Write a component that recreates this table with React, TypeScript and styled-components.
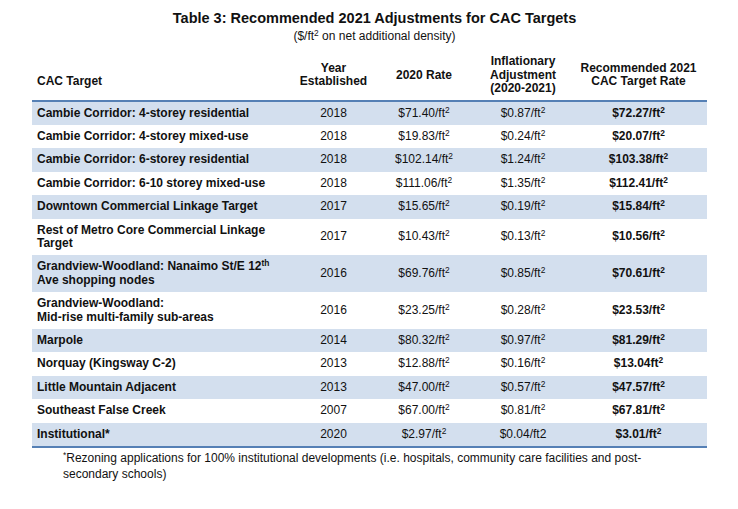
import React from "react";
import styled, { createGlobalStyle } from "styled-components";

const Global = createGlobalStyle`
  html, body { margin: 0; padding: 0; background: #fff; }
  body { font-family: "Liberation Sans", Arial, sans-serif; color: #111; }
`;

const Page = styled.div`
  width: 738px;
  height: 509px;
  padding: 10px 0 0 32px;
  box-sizing: border-box;
`;

const Title = styled.h1`
  margin: 0;
  width: 675px;
  text-align: center;
  font-size: 14.5px;
  line-height: 17px;
  font-weight: 700;
  padding-left: 10px;
  box-sizing: border-box;
`;

const Subtitle = styled.div`
  width: 675px;
  margin-top: 2px;
  text-align: center;
  font-size: 12px;
  line-height: 14px;
  padding-left: 10px;
  box-sizing: border-box;
`;

const Table = styled.div`
  width: 675px;
  margin-top: 8px;
`;

const cols = "263px 77px 104px 94px 137px";

const HeadRow = styled.div`
  display: grid;
  grid-template-columns: ${cols};
  align-items: center;
  padding: 4px 0 4px;
  border-bottom: 2px solid #5580b5;
  font-size: 12px;
  line-height: 13.5px;
  font-weight: 700;
`;

const HeadCell = styled.div<{ $left?: boolean }>`
  text-align: ${(p) => (p.$left ? "left" : "center")};
  padding-left: ${(p) => (p.$left ? "5px" : "0")};
  padding-top: ${(p) => (p.$left ? "13px" : "0")};
`;

const Body = styled.div`
  border-bottom: 2px solid #5580b5;
`;

const Row = styled.div<{ $shade: boolean }>`
  display: grid;
  grid-template-columns: ${cols};
  align-items: center;
  background: ${(p) => (p.$shade ? "#d3dfee" : "#ffffff")};
  padding: 5px 0;
  font-size: 12px;
  line-height: 13.4px;
`;

const NameCell = styled.div`
  font-weight: 700;
  padding-left: 5px;
`;

const NumCell = styled.div<{ $bold?: boolean }>`
  text-align: center;
  font-weight: ${(p) => (p.$bold ? 700 : 400)};
`;

const Sup = styled.sup`
  font-size: 0.7em;
  line-height: 0;
  vertical-align: 0.45em;
`;

const Footnote = styled.div`
  margin: 3px 0 0 31px;
  width: 600px;
  font-size: 12px;
  line-height: 15.5px;
`;

type R = {
  name: React.ReactNode;
  year: string;
  rate: string;
  infl: string;
  inflPlain?: boolean;
  rec: string;
  recNoSlash?: boolean;
};

const rows: R[] = [
  { name: "Cambie Corridor: 4-storey residential", year: "2018", rate: "$71.40", infl: "$0.87", rec: "$72.27" },
  { name: "Cambie Corridor: 4-storey mixed-use", year: "2018", rate: "$19.83", infl: "$0.24", rec: "$20.07" },
  { name: "Cambie Corridor: 6-storey residential", year: "2018", rate: "$102.14", infl: "$1.24", rec: "$103.38" },
  { name: "Cambie Corridor: 6-10 storey mixed-use", year: "2018", rate: "$111.06", infl: "$1.35", rec: "$112.41" },
  { name: "Downtown Commercial Linkage Target", year: "2017", rate: "$15.65", infl: "$0.19", rec: "$15.84" },
  {
    name: (
      <>
        Rest of Metro Core Commercial Linkage
        <br />
        Target
      </>
    ),
    year: "2017",
    rate: "$10.43",
    infl: "$0.13",
    rec: "$10.56",
  },
  {
    name: (
      <>
        Grandview-Woodland: Nanaimo St/E 12<Sup>th</Sup>
        <br />
        Ave shopping nodes
      </>
    ),
    year: "2016",
    rate: "$69.76",
    infl: "$0.85",
    rec: "$70.61",
  },
  {
    name: (
      <>
        Grandview-Woodland:
        <br />
        Mid-rise multi-family sub-areas
      </>
    ),
    year: "2016",
    rate: "$23.25",
    infl: "$0.28",
    rec: "$23.53",
  },
  { name: "Marpole", year: "2014", rate: "$80.32", infl: "$0.97", rec: "$81.29" },
  { name: "Norquay (Kingsway C-2)", year: "2013", rate: "$12.88", infl: "$0.16", rec: "$13.04", recNoSlash: true },
  { name: "Little Mountain Adjacent", year: "2013", rate: "$47.00", infl: "$0.57", rec: "$47.57" },
  { name: "Southeast False Creek", year: "2007", rate: "$67.00", infl: "$0.81", rec: "$67.81" },
  { name: "Institutional*", year: "2020", rate: "$2.97", infl: "$0.04", inflPlain: true, rec: "$3.01" },
];

const Ft = ({ slash = true }: { slash?: boolean }) => (
  <>
    {slash ? "/" : ""}ft<Sup>2</Sup>
  </>
);

export default function App() {
  return (
    <>
      <Global />
      <Page>
        <Title>Table 3: Recommended 2021 Adjustments for CAC Targets</Title>
        <Subtitle>
          ($/ft<Sup>2</Sup> on net additional density)
        </Subtitle>
        <Table>
          <HeadRow>
            <HeadCell $left>CAC Target</HeadCell>
            <HeadCell>
              Year
              <br />
              Established
            </HeadCell>
            <HeadCell>2020 Rate</HeadCell>
            <HeadCell>
              Inflationary
              <br />
              Adjustment
              <br />
              (2020-2021)
            </HeadCell>
            <HeadCell>
              Recommended 2021
              <br />
              CAC Target Rate
            </HeadCell>
          </HeadRow>
          <Body>
            {rows.map((r, i) => (
              <Row key={i} $shade={i % 2 === 0}>
                <NameCell>{r.name}</NameCell>
                <NumCell>{r.year}</NumCell>
                <NumCell>
                  {r.rate}
                  <Ft />
                </NumCell>
                <NumCell>
                  {r.inflPlain ? `${r.infl}/ft2` : (
                    <>
                      {r.infl}
                      <Ft />
                    </>
                  )}
                </NumCell>
                <NumCell $bold>
                  {r.rec}
                  <Ft slash={!r.recNoSlash} />
                </NumCell>
              </Row>
            ))}
          </Body>
        </Table>
        <Footnote>
          <Sup>*</Sup>Rezoning applications for 100% institutional developments (i.e. hospitals, community care facilities and post-secondary schools)
        </Footnote>
      </Page>
    </>
  );
}
